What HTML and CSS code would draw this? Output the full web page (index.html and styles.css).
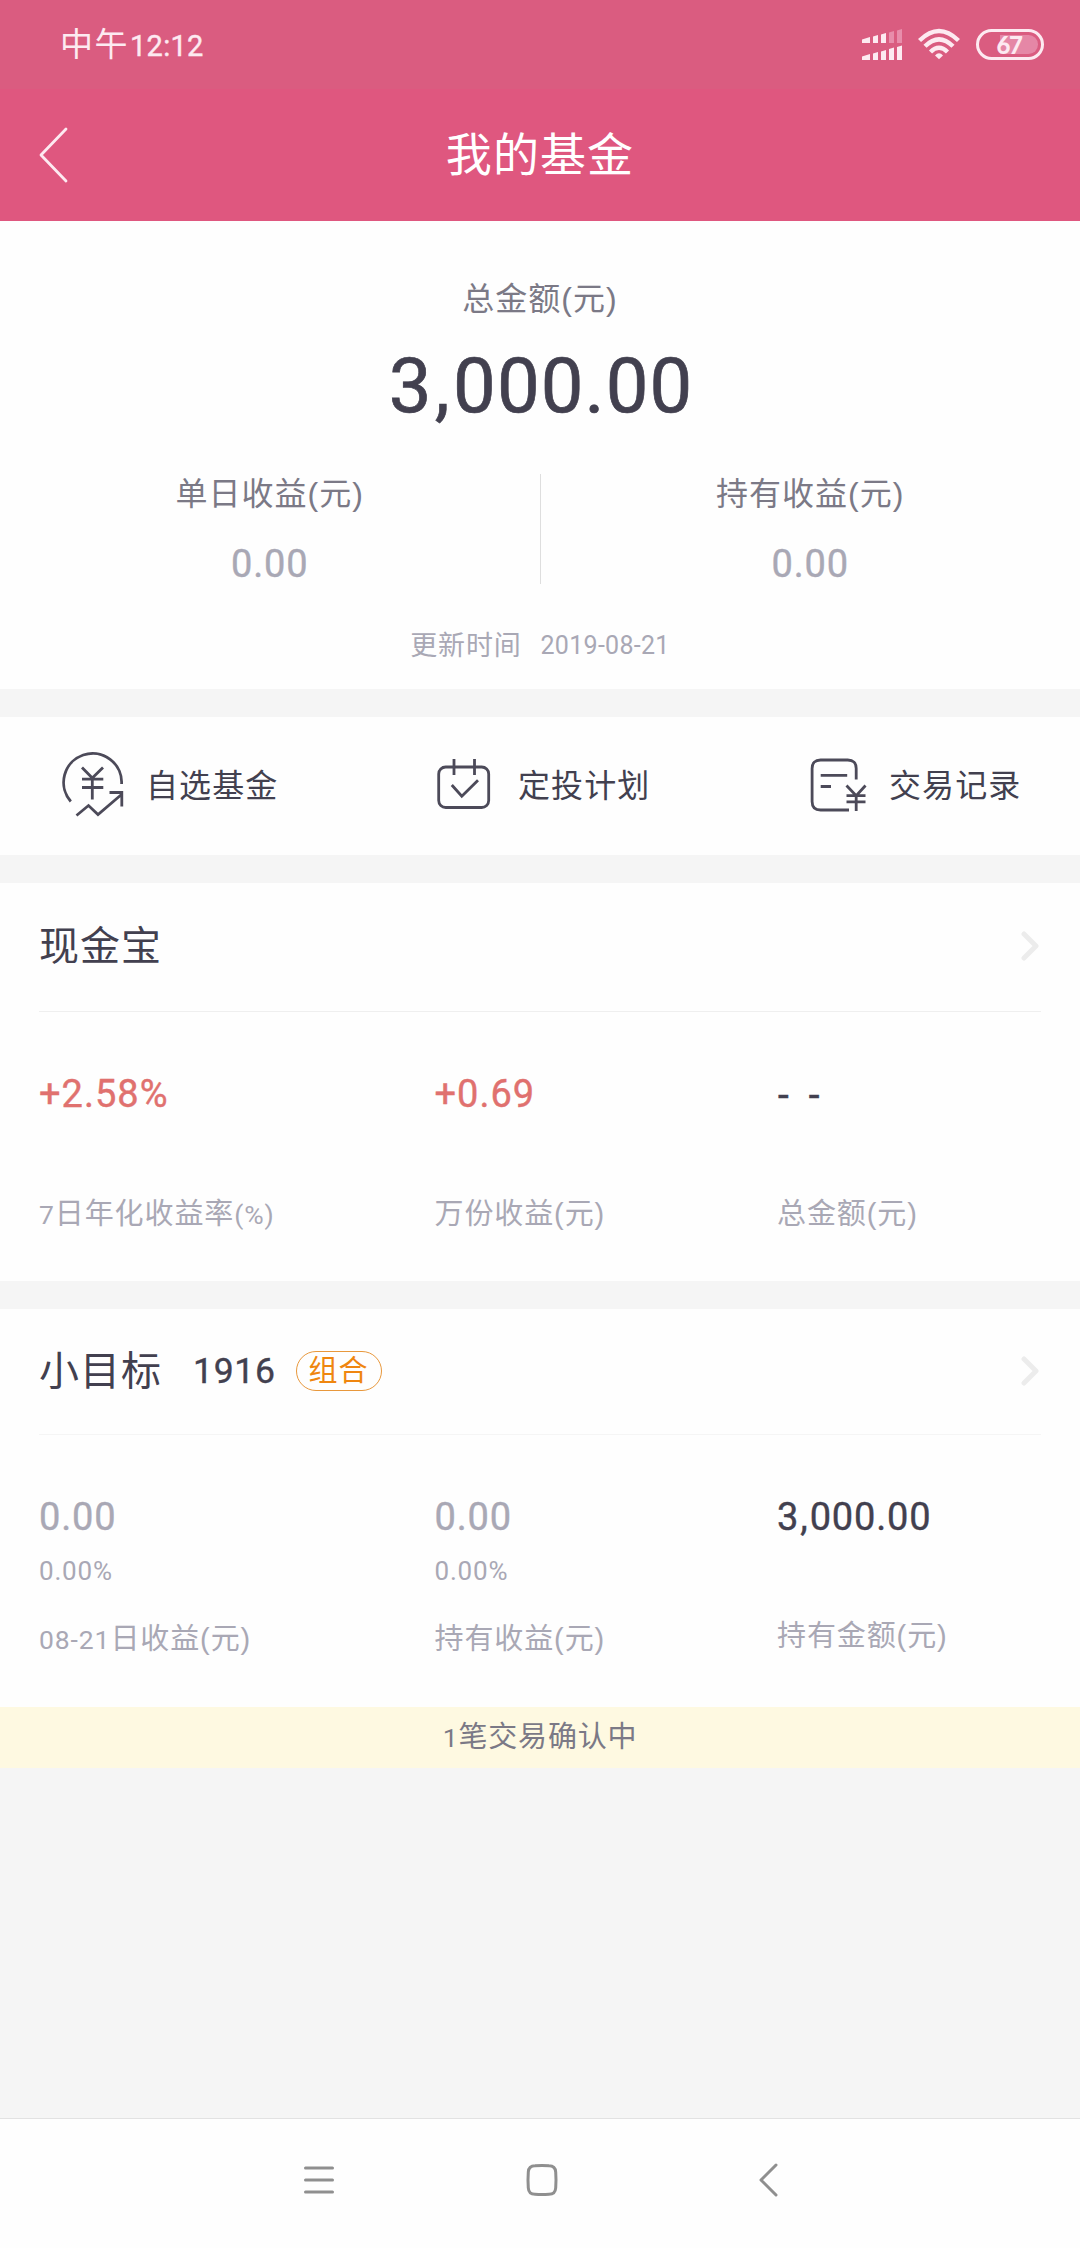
FILE: index.html
```html
<!DOCTYPE html>
<html lang="zh-CN">
<head>
<meta charset="utf-8">
<title>我的基金</title>
<link rel="stylesheet" href="styles.css">
</head>
<body>
<div class="status-bar">
  <div class="clock">中午<span class="clock-digits">12:12</span></div>
  <div class="status-icons">
    <svg class="signal" width="40" height="32" viewBox="0 0 40 32">
      <path d="M0 15V11.500L8 9V15zM11 15V8.500L16 7V15zM19 15V6.500L24 5V15zM0 32V28.500L8 26V32zM11 32V25.500L16 24V32zM19 32V23.500L24 22V32zM27 32V21L32 19.500V32zM35 32V19L40 17.500V32z" fill="#fdeaf1"/>
      <path d="M27 15V4.500L32 3V15zM35 15V2.500L40 1V15z" fill="#e88dab"/>
    </svg>
    <svg class="wifi" width="42" height="32" viewBox="0 0 42 32">
      <g fill="none" stroke="#fdeaf1" stroke-width="4.400">
        <path d="M1.500 12.500Q21 -6.500 40.500 12.500"/>
        <path d="M7 18.300Q21 4.300 35 18.300"/>
        <path d="M12.500 24Q21 15.500 29.500 24"/>
      </g>
      <path d="M17 27.500Q21 23 25 27.500L21 31.300z" fill="#fdeaf1"/>
    </svg>
    <div class="battery"><span class="battery-level"></span><span class="battery-text">67</span></div>
  </div>
</div>
<header class="title-bar">
  <svg class="back" width="30" height="56" viewBox="0 0 30 56"><path d="M28 2L3 28L28 54" fill="none" stroke="#fdeaf1" stroke-width="2.800" stroke-linecap="round" stroke-linejoin="round"/></svg>
  <h1 class="title">我的基金</h1>
</header>

<section class="summary">
  <div class="label">总金额(元)</div>
  <div class="total">3<span class="comma">,</span>000.00</div>
  <div class="earnings">
    <div class="earning"><div class="label">单日收益(元)</div><div class="value muted">0.00</div></div>
    <div class="earning"><div class="label">持有收益(元)</div><div class="value muted">0.00</div></div>
  </div>
  <div class="updated"><span>更新时间</span><span class="updated-date">2019-08-21</span></div>
</section>

<nav class="shortcuts">
  <a class="shortcut shortcut-watch">
    <svg class="icon" width="64" height="68" viewBox="0 0 64 68">
      <path d="M60.600 34A29 29 0 1 0 9.800 51.500M21 17.500L31.300 28L42 17.500M31.300 28V49.500M21 29.200H42.300M21 37.500H42.300M15.500 65.500L27.500 55.500L37 64.500L60.500 44.500M48.500 42.500H60.800V56.500"/>
    </svg>
    <span>自选基金</span>
  </a>
  <a class="shortcut shortcut-plan">
    <svg class="icon" width="56" height="52" viewBox="0 0 56 52">
      <rect x="3.700" y="10" width="50" height="40.500" rx="7"/>
      <path d="M19 2V18M39.500 2V18M16.800 28L26.800 39.300L43 23.300"/>
    </svg>
    <span>定投计划</span>
  </a>
  <a class="shortcut shortcut-log">
    <svg class="icon" width="58" height="55" viewBox="0 0 58 55">
      <path d="M47.200 22.500V11.500Q47.200 3 38.700 3H11.600Q3.100 3 3.100 11.500V44.500Q3.100 53 11.600 53H40M11.700 18.300H38.200M11.700 29.500H22M37.500 28.500L47.200 38.700L56.500 28.500M47.200 38.700V54M37.500 38.700H56.500M37.500 44.800H56.500"/>
    </svg>
    <span>交易记录</span>
  </a>
</nav>

<section class="card card-cash">
  <div class="card-head">
    <h2 class="card-title">现金宝</h2>
    <svg class="chevron" width="18" height="32" viewBox="0 0 18 32"><path d="M3 4L15 16L3 28"/></svg>
  </div>
  <div class="stats">
    <div class="stat"><div class="value gain">+2.58%</div><div class="caption"><span class="latin">7</span>日年化收益率<span class="latin">(%)</span></div></div>
    <div class="stat"><div class="value gain">+0.69</div><div class="caption">万份收益(元)</div></div>
    <div class="stat"><div class="value dashes">- -</div><div class="caption">总金额(元)</div></div>
  </div>
</section>

<section class="card card-goal">
  <div class="card-head">
    <h2 class="card-title">小目标</h2><span class="goal-code">1916</span><span class="tag">组合</span>
    <svg class="chevron" width="18" height="32" viewBox="0 0 18 32"><path d="M3 4L15 16L3 28"/></svg>
  </div>
  <div class="stats">
    <div class="stat"><div class="value muted">0.00</div><div class="rate">0.00%</div><div class="caption"><span class="latin">08-21</span>日收益(元)</div></div>
    <div class="stat"><div class="value muted">0.00</div><div class="rate">0.00%</div><div class="caption">持有收益(元)</div></div>
    <div class="stat stat-amount"><div class="value">3<span class="comma">,</span>000.00</div><div class="caption">持有金额(元)</div></div>
  </div>
</section>
<div class="notice"><span><span class="latin">1</span>笔交易确认中</span></div>

<footer class="system-nav">
  <svg width="34" height="34" viewBox="0 0 34 34"><path d="M3.500 5H30.500M3.500 17H30.500M3.500 29H30.500"/></svg>
  <svg width="34" height="34" viewBox="0 0 34 34"><path d="M10 2.700Q17 2.300 24 2.700Q30.300 2.700 30.700 9Q31.300 17 30.700 25Q30.300 31.300 24 31.300Q17 31.800 10 31.300Q3.700 31.300 3.300 25Q2.700 17 3.300 9Q3.700 2.700 10 2.700z"/></svg>
  <svg width="34" height="34" viewBox="0 0 34 34"><path d="M28 2L13 17L28 32"/></svg>
</footer>
</body>
</html>
```
FILE: styles.css
```css
* { box-sizing: border-box; }
body {
  margin: 0;
  width: 1080px;
  height: 2248px;
  display: flex;
  flex-direction: column;
  background: #f5f5f5;
  color: #42404f;
  font-family: "Liberation Sans", "Noto Sans CJK SC", sans-serif;
  overflow: hidden;
}
h1, h2 { margin: 0; font-weight: 400; }
svg { display: block; flex: none; }

.status-bar {
  height: 89px;
  display: flex;
  justify-content: space-between;
  align-items: flex-start;
  padding: 24px 36px 0 60px;
  background: #da5c80;
  color: #fdeaf1;
}
.clock { font-size: 33px; line-height: 42px; letter-spacing: 1.500px; }
.clock-digits { font-family: Roboto, sans-serif; font-size: 29px; letter-spacing: 0.300px; margin-left: 1px; -webkit-text-stroke: 0.400px; }
.status-icons { display: flex; align-items: flex-start; padding-top: 4px; }
.wifi { margin: 0 16px; }
.battery {
  display: grid;
  width: 68px;
  height: 31px;
  margin-top: 1px;
  padding: 3px;
  border: 3px solid #fdeaf1;
  border-radius: 16px;
}
.battery-level {
  grid-area: 1 / 1;
  justify-self: end;
  width: 38px;
  height: 19px;
  border-radius: 0 10px 10px 0;
  background: #e587a6;
}
.battery-text {
  grid-area: 1 / 1;
  justify-self: center;
  margin-right: 2px;
  font: 900 24px/19px Lato, sans-serif;
  letter-spacing: -1.500px;
}

.title-bar {
  height: 132px;
  display: grid;
  grid-template-columns: 100px 1fr 100px;
  align-items: center;
  background: #df577f;
  color: #fff;
}
.back { margin-left: 38px; }
.title { font-size: 46px; line-height: 60px; letter-spacing: 1.100px; text-align: center; }

.summary { height: 468px; padding-top: 57px; background: #fefefe; text-align: center; }
.label { font-size: 32px; line-height: 42px; letter-spacing: 1px; color: #7b7986; }
.total {
  margin-top: 21px;
  font-family: Roboto, sans-serif;
  font-size: 76px;
  line-height: 90px;
  letter-spacing: 1.100px;
  padding-left: 2px;
  -webkit-text-stroke: 0.700px;
}
.comma { padding: 0 0.030em; }
.earnings { display: flex; height: 110px; margin-top: 43px; }
.earning { flex: 1; }
.earning .label { margin-top: -1px; }
.earning + .earning { border-left: 1px solid #dedede; }
.value { font-family: Roboto, sans-serif; font-size: 38px; line-height: 44px; letter-spacing: 0.800px; -webkit-text-stroke: 0.400px; }
.earning .value { margin-top: 27px; }
.muted { color: #a9a8b5; }
.updated { display: flex; justify-content: center; gap: 19px; margin-top: 43px; font-size: 27px; line-height: 38px; letter-spacing: 0.800px; color: #a9a8b5; }
.updated-date { font-family: Roboto, sans-serif; font-size: 25px; letter-spacing: 0.300px; }

.shortcuts { display: flex; height: 138px; margin-top: 28px; background: #fefefe; }
.shortcut { display: flex; align-items: flex-start; font-size: 32px; line-height: 42px; letter-spacing: 1.100px; }
.shortcut span { margin-top: 48px; }
.shortcut-watch { width: 435px; padding-left: 61px; }
.shortcut-watch span { margin-left: 21px; }
.shortcut-watch .icon { margin-top: 33px; }
.shortcut-plan { width: 374px; }
.shortcut-plan span { margin-left: 27px; }
.shortcut-plan .icon { margin-top: 40px; }
.shortcut-log span { margin-left: 22px; }
.shortcut-log .icon { margin-top: 40px; }
.icon { fill: none; stroke: #4c4a59; stroke-width: 2.800; }

.card { margin-top: 28px; height: 398px; padding: 0 39px; background: #fefefe; }
.card-head { display: flex; align-items: center; height: 129px; padding-bottom: 2px; border-bottom: 1px solid #efefef; }
.card-title { font-size: 40px; line-height: 50px; letter-spacing: 1px; }
.chevron { margin: 0 2px 0 auto; fill: none; stroke: #ececec; stroke-width: 5; stroke-linecap: round; stroke-linejoin: round; }
.stats { display: grid; grid-template-columns: 395.500px 342.500px 1fr; }
.gain { color: #e0716f; letter-spacing: 1px; }
.dashes { word-spacing: 6px; font-family: "Liberation Sans", sans-serif; -webkit-text-stroke: 0.500px; }
.caption { font-size: 29px; line-height: 38px; letter-spacing: 0.900px; color: #a9a8b5; }
.latin { font-family: Roboto, sans-serif; font-size: 26.500px; letter-spacing: 0.900px; }
.card-cash .stats { padding-top: 60px; }
.card-cash .caption { margin-top: 79px; }

.card-goal .card-head { height: 126px; border-color: #f5f5f5; }
.goal-code { margin-left: 31px; font-family: Roboto, sans-serif; font-size: 35.500px; line-height: 50px; letter-spacing: 0.700px; -webkit-text-stroke: 0.400px; }
.tag {
  width: 86px;
  height: 40px;
  margin-left: 20px;
  border: 1px solid #e8983c;
  border-radius: 20px;
  color: #ef860f;
  font-size: 29px;
  line-height: 38px;
  letter-spacing: 1px;
  text-align: center;
}
.card-goal .stats { padding-top: 60px; }
.rate { margin-top: 17px; font-family: Roboto, sans-serif; font-size: 26px; line-height: 30px; letter-spacing: 0.800px; color: #a9a8b5; }
.card-goal .caption { margin-top: 34px; }
.stat-amount .caption { margin-top: 78px; }

.notice { height: 61px; display: flex; justify-content: center; align-items: center; background: #fef9e1; color: #7b7986; font-size: 29px; line-height: 40px; letter-spacing: 0.800px; }

.system-nav {
  margin-top: auto;
  height: 130px;
  display: flex;
  justify-content: center;
  gap: 189px;
  padding: 44px 0 0 3px;
  border-top: 1px solid #e2e2e2;
  background: #fefefe;
}
.system-nav svg { fill: none; stroke: #8f8f8f; stroke-width: 3; stroke-linecap: round; stroke-linejoin: round; }
```
